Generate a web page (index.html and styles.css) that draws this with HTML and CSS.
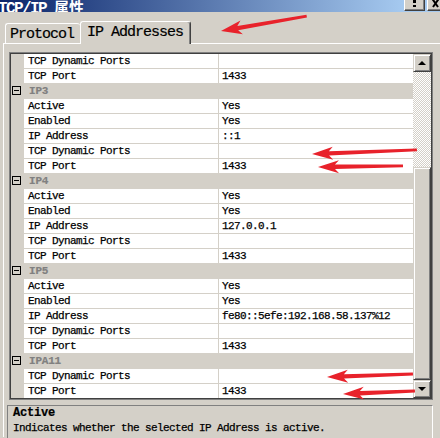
FILE: index.html
```html
<!DOCTYPE html>
<html>
<head>
<meta charset="utf-8">
<link rel="stylesheet" href="styles.css">
</head>
<body>
<div class="titlebar">
  <div class="title">TCP/IP <span class="cjk">属性</span></div>
  <div class="tbtns">
    <div class="tbtn"><svg width="19" height="9" viewBox="0 0 19 9"><rect x="8" y="0" width="3" height="3" fill="#000"/><rect x="8" y="5" width="3" height="2" fill="#000"/></svg></div>
    <div class="tbtn"><svg width="19" height="9" viewBox="0 0 19 9"><path d="M3 -3 L10 7 M12 -3 L5 7" stroke="#000" stroke-width="2" fill="none"/></svg></div>
  </div>
</div>
<div class="tabs">
  <div class="tab tab-off">Protocol</div>
  <div class="tab tab-on">IP Addresses</div>
</div>
<div class="panel">
  <div class="list">
    <div class="list-inner">
      <div class="grid">
        <div class="row"><div class="gut"></div><div class="name">TCP Dynamic Ports</div><div class="val"></div></div>
        <div class="row"><div class="gut"></div><div class="name">TCP Port</div><div class="val">1433</div></div>
        <div class="row cat"><div class="gut"><span class="box"></span></div><div class="catname">IP3</div></div>
        <div class="row"><div class="gut"></div><div class="name">Active</div><div class="val">Yes</div></div>
        <div class="row"><div class="gut"></div><div class="name">Enabled</div><div class="val">Yes</div></div>
        <div class="row"><div class="gut"></div><div class="name">IP Address</div><div class="val">::1</div></div>
        <div class="row"><div class="gut"></div><div class="name">TCP Dynamic Ports</div><div class="val"></div></div>
        <div class="row"><div class="gut"></div><div class="name">TCP Port</div><div class="val">1433</div></div>
        <div class="row cat"><div class="gut"><span class="box"></span></div><div class="catname">IP4</div></div>
        <div class="row"><div class="gut"></div><div class="name">Active</div><div class="val">Yes</div></div>
        <div class="row"><div class="gut"></div><div class="name">Enabled</div><div class="val">Yes</div></div>
        <div class="row"><div class="gut"></div><div class="name">IP Address</div><div class="val">127.0.0.1</div></div>
        <div class="row"><div class="gut"></div><div class="name">TCP Dynamic Ports</div><div class="val"></div></div>
        <div class="row"><div class="gut"></div><div class="name">TCP Port</div><div class="val">1433</div></div>
        <div class="row cat"><div class="gut"><span class="box"></span></div><div class="catname">IP5</div></div>
        <div class="row"><div class="gut"></div><div class="name">Active</div><div class="val">Yes</div></div>
        <div class="row"><div class="gut"></div><div class="name">Enabled</div><div class="val">Yes</div></div>
        <div class="row"><div class="gut"></div><div class="name">IP Address</div><div class="val">fe80::5efe:192.168.58.137%12</div></div>
        <div class="row"><div class="gut"></div><div class="name">TCP Dynamic Ports</div><div class="val"></div></div>
        <div class="row"><div class="gut"></div><div class="name">TCP Port</div><div class="val">1433</div></div>
        <div class="row cat"><div class="gut"><span class="box"></span></div><div class="catname">IPA11</div></div>
        <div class="row"><div class="gut"></div><div class="name">TCP Dynamic Ports</div><div class="val"></div></div>
        <div class="row"><div class="gut"></div><div class="name">TCP Port</div><div class="val">1433</div></div>
      </div>
      <div class="sb">
        <div class="sbtn"><span class="tri-up"></span></div>
        <div class="trough"></div>
        <div class="thumb"></div>
        <div class="sbtn"><span class="tri-down"></span></div>
      </div>
    </div>
  </div>
  <div class="desc">
    <div class="desc-title">Active</div>
    <div class="desc-text">Indicates whether the selected IP Address is active.</div>
  </div>
</div>
<svg class="annot" width="440" height="438" viewBox="0 0 440 438">
  <g fill="#e8222b">
    <polygon transform="translate(221,31) rotate(-9.9)" points="0,0 21,-7 17,-2.2 87,-1.4 87,1.4 17,2.2 21,7"/>
    <polygon transform="translate(312,154) rotate(-2.2)" points="0,0 21,-6.5 17,-2.2 105,-1.4 105,1.4 17,2.2 21,6.5"/>
    <polygon transform="translate(318,167) rotate(-0.7)" points="0,0 21,-6.5 17,-2.2 85,-1.4 85,1.4 17,2.2 21,6.5"/>
    <polygon transform="translate(327,377) rotate(-2)" points="0,0 21,-6.5 17,-2.2 86,-1.4 86,1.4 17,2.2 21,6.5"/>
    <polygon transform="translate(343,394) rotate(-2.4)" points="0,0 21,-6.5 17,-2.2 72,-1.4 72,1.4 17,2.2 21,6.5"/>
  </g>
</svg>
</body>
</html>
```
FILE: styles.css
```css
html, body {
  margin: 0;
  padding: 0;
}
body {
  width: 440px;
  height: 438px;
  overflow: hidden;
  background: #d4d0c8;
  font-family: "Liberation Mono", "Noto Sans CJK SC", monospace;
  position: relative;
}
.titlebar {
  height: 12px;
  display: flex;
  overflow: hidden;
  background: linear-gradient(to right, #0a246a 0%, #a6caf0 92%, #a6caf0 100%);
}
.title {
  color: #fff;
  font-weight: bold;
  font-size: 16px;
  letter-spacing: -1.6px;
  line-height: 16px;
  margin-top: -1px;
  margin-left: -2px;
  white-space: nowrap;
  flex: 1;
}
.cjk {
  font-family: "Noto Sans CJK SC", sans-serif;
  font-size: 15px;
  letter-spacing: 0;
  font-weight: bold;
}
.tbtns {
  width: 36px;
  flex-shrink: 0;
  display: flex;
  gap: 2px;
}
.tbtn {
  width: 21px;
  height: 11px;
  flex-shrink: 0;
  box-sizing: border-box;
  background: #d4d0c8;
  border-right: 1px solid #404040;
  border-bottom: 1px solid #404040;
  border-left: 1px solid #fff;
  box-shadow: inset -1px -1px #808080;
  display: flex;
  align-items: flex-start;
}
.tabs {
  height: 31px;
  display: flex;
  align-items: flex-end;
  padding-left: 5px;
}
.tab {
  background: #d4d0c8;
  box-sizing: border-box;
  border-top: 1px solid #fff;
  border-left: 1px solid #fff;
  border-radius: 3px 3px 0 0;
  font-size: 15px;
  letter-spacing: -1px;
  line-height: 16px;
  padding-top: 3px;
  color: #000;
  white-space: nowrap;
  -webkit-text-stroke: 0.2px #000;
}
.tab-off {
  width: 75px;
  height: 20px;
  padding-left: 4px;
}
.tab-on {
  width: 111px;
  height: 23px;
  padding-left: 6px;
  margin-bottom: -1px;
  border-right: 1px solid #404040;
  box-shadow: inset -1px 0 #808080;
  position: relative;
  z-index: 1;
}
.panel {
  margin-left: 3px;
  border-top: 1px solid #fff;
  border-left: 1px solid #fff;
  height: 394px;
  padding-top: 8px;
  box-sizing: border-box;
}
.list {
  margin-left: 5px;
  width: 424px;
  height: 348px;
  box-sizing: border-box;
  border: 1px solid #808080;
}
.list-inner {
  height: 346px;
  box-sizing: border-box;
  border: 1px solid #404040;
  display: flex;
  overflow: hidden;
}
.grid {
  width: 402px;
  height: 344px;
  overflow: hidden;
}
.row {
  display: flex;
  height: 15px;
  background: #d4d0c8;
  font-size: 11px;
  letter-spacing: -0.6px;
  line-height: 14px;
  color: #000;
  -webkit-text-stroke: 0.25px #000;
}
.gut {
  width: 13px;
  flex-shrink: 0;
  height: 15px;
}
.name {
  width: 194px;
  height: 14px;
  box-sizing: border-box;
  background: #fff;
  padding-left: 4px;
  white-space: nowrap;
  overflow: hidden;
}
.val {
  width: 194px;
  height: 14px;
  margin-left: 1px;
  box-sizing: border-box;
  background: #fff;
  padding-left: 3px;
  white-space: nowrap;
  overflow: hidden;
}
.cat .gut {
  padding: 2px 0 0 1px;
  box-sizing: border-box;
}
.box {
  display: block;
  width: 9px;
  height: 9px;
  box-sizing: border-box;
  border: 1px solid #000;
  position: relative;
}
.box::after {
  content: "";
  position: absolute;
  left: 1px;
  top: 3px;
  width: 5px;
  height: 1px;
  background: #000;
}
.catname {
  padding-left: 5px;
  font-weight: bold;
  color: #808080;
  letter-spacing: -0.2px;
  -webkit-text-stroke: 0.2px #808080;
}
.sb {
  width: 18px;
  display: flex;
  flex-direction: column;
}
.sbtn, .thumb {
  box-sizing: border-box;
  background: #d4d0c8;
  border: 1px solid;
  border-color: #d4d0c8 #404040 #404040 #d4d0c8;
  box-shadow: inset 1px 1px #fff, inset -1px -1px #808080;
}
.sbtn {
  height: 18px;
  display: flex;
  align-items: center;
  justify-content: center;
}
.trough {
  height: 95px;
  background-image: conic-gradient(#fff 25%, #d4d0c8 0 50%, #fff 0 75%, #d4d0c8 0);
  background-size: 2px 2px;
}
.thumb {
  flex: 1;
}
.tri-up {
  width: 0;
  height: 0;
  border-left: 4px solid transparent;
  border-right: 4px solid transparent;
  border-bottom: 4px solid #000;
  margin-top: -1px;
}
.tri-down {
  width: 0;
  height: 0;
  border-left: 4px solid transparent;
  border-right: 4px solid transparent;
  border-top: 4px solid #000;
}
.desc {
  margin: 5px 0 0 3px;
  width: 426px;
  height: 33px;
  box-sizing: border-box;
  border-top: 1px solid #808080;
  border-left: 1px solid #808080;
  border-right: 1px solid #fff;
  padding-left: 5px;
  overflow: hidden;
}
.desc-title {
  font-weight: bold;
  font-size: 12px;
  letter-spacing: -0.2px;
  line-height: 15px;
  -webkit-text-stroke: 0.2px #000;
}
.desc-text {
  font-size: 11px;
  letter-spacing: -0.6px;
  line-height: 15px;
  white-space: nowrap;
  -webkit-text-stroke: 0.25px #000;
}
.annot {
  position: absolute;
  left: 0;
  top: 0;
  pointer-events: none;
}
```
